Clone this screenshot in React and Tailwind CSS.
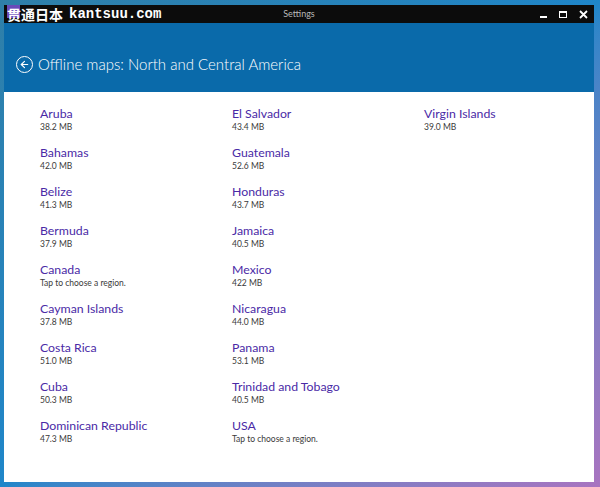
import { ArrowLeft } from 'lucide-react'

const col1 = [
  ['Aruba', '38.2 MB'],
  ['Bahamas', '42.0 MB'],
  ['Belize', '41.3 MB'],
  ['Bermuda', '37.9 MB'],
  ['Canada', 'Tap to choose a region.'],
  ['Cayman Islands', '37.8 MB'],
  ['Costa Rica', '51.0 MB'],
  ['Cuba', '50.3 MB'],
  ['Dominican Republic', '47.3 MB'],
]

const col2 = [
  ['El Salvador', '43.4 MB'],
  ['Guatemala', '52.6 MB'],
  ['Honduras', '43.7 MB'],
  ['Jamaica', '40.5 MB'],
  ['Mexico', '422 MB'],
  ['Nicaragua', '44.0 MB'],
  ['Panama', '53.1 MB'],
  ['Trinidad and Tobago', '40.5 MB'],
  ['USA', 'Tap to choose a region.'],
]

const col3 = [['Virgin Islands', '39.0 MB']]

const Region = ({ name, size }) => (
  <div className="h-[39px]">
    <div className="text-[12.3px] leading-[17px] text-[#4a2aa6]">{name}</div>
    <div className="text-[8.5px] leading-[11px] text-[#3a3a3a]">{size}</div>
  </div>
)

const Column = ({ items }) => (
  <div className="flex flex-col w-[192px] shrink-0">
    {items.map(([name, size]) => (
      <Region key={name} name={name} size={size} />
    ))}
  </div>
)

export default function App() {
  return (
    <div
      className="w-[600px] h-[487px] overflow-hidden bg-gradient-to-br from-[#2f7fa8] via-[#1f86c9] to-[#a874c0] pt-[5px] pl-[4px] pr-[6px] pb-[5px]"
      style={{ fontFamily: 'Lato, "Open Sans", sans-serif' }}
    >
      <div className="flex flex-col h-full bg-white">
        {/* title bar */}
        <div className="relative flex items-center h-[18px] bg-[#0c0c0c]">
          <div className="flex items-center pl-[3px]">
            <span className="relative text-[14px] leading-[18px] text-white font-bold" style={{ fontFamily: '"Noto Sans CJK SC", sans-serif' }}>
              <span className="absolute left-0 top-[0px] w-[13px] h-[13px] bg-[#6a4bb8]" />
              <span className="relative">贯通日本</span>
            </span>
            <span className="ml-[6px] text-[14px] leading-[18px] text-white font-bold" style={{ fontFamily: '"Liberation Mono", monospace' }}>
              kantsuu.com
            </span>
          </div>
          <div className="absolute left-0 right-0 top-0 h-[18px] flex items-center justify-center text-[9px] text-[#b8b8b8] pointer-events-none">
            Settings
          </div>
          <div className="ml-auto flex items-center gap-[12px] pr-[6px] text-white">
            <span className="block w-[7px] h-[2px] bg-white mt-[5px]" />
            <span className="block w-[8px] h-[7px] border border-white border-t-2" />
            <svg width="9" height="9" viewBox="0 0 9 9">
              <path d="M1 1 L8 8 M8 1 L1 8" stroke="white" strokeWidth="1.8" />
            </svg>
          </div>
        </div>

        {/* header */}
        <div className="flex items-center h-[69px] bg-[#0a6aaa] pl-[12px] pt-[13px]">
          <div className="flex items-center justify-center w-[17px] h-[17px] rounded-full border-[1.5px] border-white">
            <ArrowLeft size={11} color="white" strokeWidth={2.5} />
          </div>
          <div className="ml-[5px] text-[15px] text-white font-light">
            Offline maps: North and Central America
          </div>
        </div>

        {/* list */}
        <div className="flex pl-[36px] pt-[13px]">
          <Column items={col1} />
          <Column items={col2} />
          <Column items={col3} />
        </div>
      </div>
    </div>
  )
}
